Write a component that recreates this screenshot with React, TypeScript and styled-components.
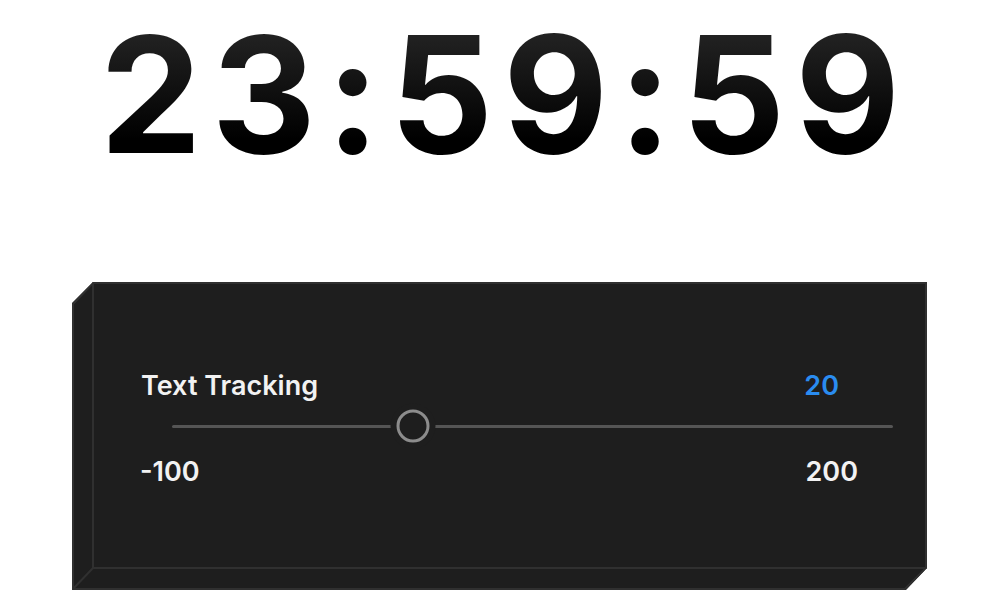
import React from "react";
import styled, { createGlobalStyle } from "styled-components";

const Global = createGlobalStyle`
  html, body { margin: 0; padding: 0; background: #ffffff; }
  body { font-family: Inter, "Noto Sans", sans-serif; }
`;

const Page = styled.div`
  width: 1000px;
  height: 612px;
  display: flex;
  flex-direction: column;
  align-items: center;
`;

const Clock = styled.div`
  margin-top: 3px;
  padding: 10px 0.03em 10px 0.09em;
  font-family: Inter, sans-serif;
  font-weight: 700;
  font-size: 162px;
  line-height: 162px;
  letter-spacing: 0.06em;
  background: linear-gradient(180deg, #2c2c2c 0%, #000000 75%);
  -webkit-background-clip: text;
  background-clip: text;
  color: transparent;
  white-space: nowrap;
`;

const PanelBox = styled.div`
  position: relative;
  align-self: flex-start;
  margin: 97px 0 0 72px;
  width: 855px;
  height: 308px;
  background: #1e1e1e;
  clip-path: polygon(21px 0, 100% 0, 100% 286px, 834px 100%, 0 100%, 0 21px);
`;

const Edges = styled.svg`
  position: absolute;
  inset: 0;
  pointer-events: none;
`;

const Face = styled.div`
  margin-left: 21px;
  width: 834px;
  height: 286px;
  box-sizing: border-box;
  padding-top: 88px;
  display: flex;
  flex-direction: column;
`;

const Row = styled.div<{ $left: number; $right: number }>`
  display: flex;
  justify-content: space-between;
  align-items: center;
  padding-left: ${(p) => p.$left}px;
  padding-right: ${(p) => p.$right}px;
`;

const Label = styled.span<{ $accent?: boolean }>`
  font-family: Inter, sans-serif;
  font-weight: 600;
  font-size: 27px;
  line-height: 32px;
  color: ${(p) => (p.$accent ? "#2a8cf0" : "#f2f2f2")};
`;

const SliderRow = styled.div`
  margin-top: 7px;
  padding-left: 79px;
  padding-right: 34px;
  height: 34px;
  display: flex;
  align-items: center;
`;

const Track = styled.div`
  position: relative;
  flex: 1;
  height: 3px;
  border-radius: 2px;
  background: #555555;
`;

const Thumb = styled.div`
  position: absolute;
  top: 50%;
  width: 33px;
  height: 33px;
  box-sizing: border-box;
  border-radius: 50%;
  border: 3.5px solid #8c8c8c;
  background: #1e1e1e;
  box-shadow: 0 0 0 6px #1e1e1e;
  transform: translate(-50%, -50%);
`;

const RangeRow = styled(Row)`
  margin-top: 13px;
`;

const min = -100;
const max = 200;
const value = 20;

export default function App() {
  const pct = 33.4;
  return (
    <>
      <Global />
      <Page>
        <Clock>23:59:59</Clock>
        <PanelBox>
          <Face>
            <Row $left={48} $right={88}>
              <Label>Text Tracking</Label>
              <Label $accent>{value}</Label>
            </Row>
            <SliderRow>
              <Track>
                <Thumb style={{ left: `${pct}%` }} />
              </Track>
            </SliderRow>
            <RangeRow $left={47} $right={69}>
              <Label>{min}</Label>
              <Label>{max}</Label>
            </RangeRow>
          </Face>
          <Edges width="855" height="308" viewBox="0 0 855 308">
            <polygon
              points="21,1 854,1 854,286 833,307 1,307 1,22"
              fill="none"
              stroke="#303030"
              strokeWidth="2"
            />
            <line x1="21" y1="0" x2="21" y2="286" stroke="#303030" strokeWidth="2" />
            <line x1="21" y1="286" x2="855" y2="286" stroke="#303030" strokeWidth="2" />
            <line x1="21" y1="286" x2="0" y2="308" stroke="#303030" strokeWidth="2" />
          </Edges>
        </PanelBox>
      </Page>
    </>
  );
}
